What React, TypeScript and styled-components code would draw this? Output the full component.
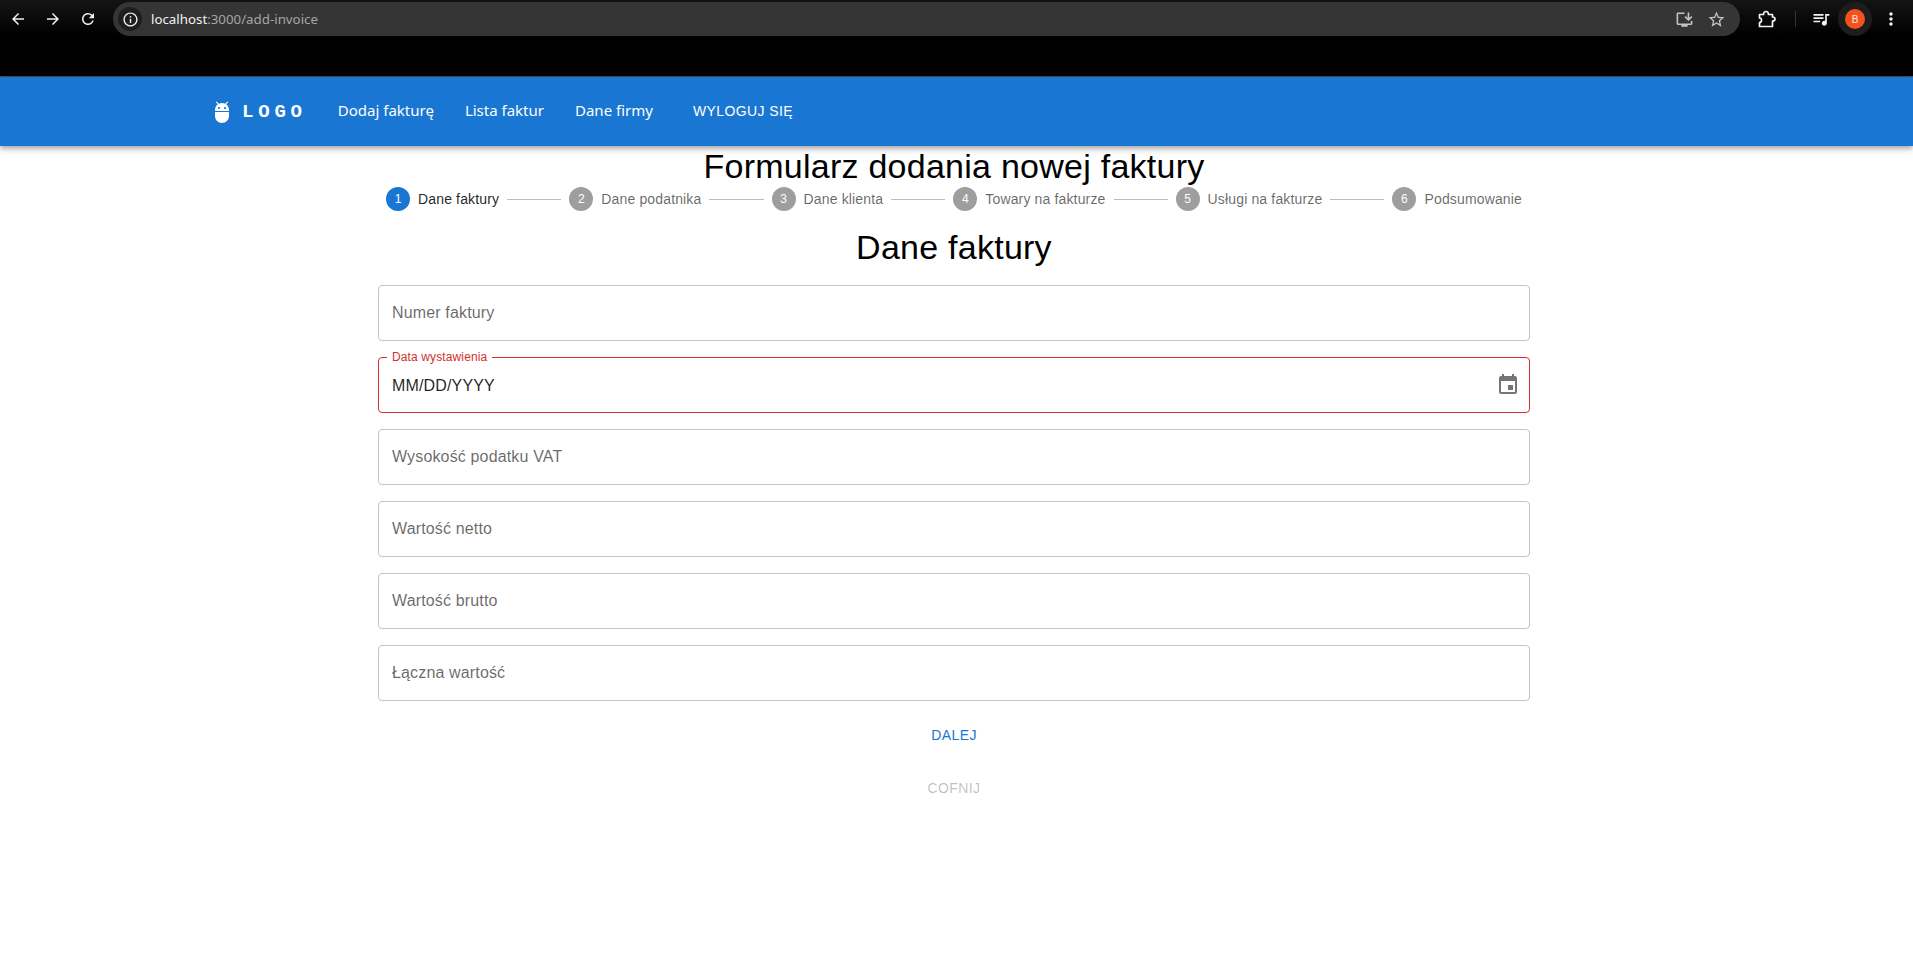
import styled, { createGlobalStyle } from 'styled-components';
import {
    MdAdb,
    MdArrowBack,
    MdArrowForward,
    MdEvent,
    MdInfoOutline,
    MdInstallDesktop,
    MdMoreVert,
    MdQueueMusic,
    MdRefresh,
    MdStarBorder,
} from 'react-icons/md';

const steps = [
    'Dane faktury',
    'Dane podatnika',
    'Dane klienta',
    'Towary na fakturze',
    'Usługi na fakturze',
    'Podsumowanie',
];

const fields = ['Numer faktury', 'Data wystawienia', 'Wysokość podatku VAT', 'Wartość netto', 'Wartość brutto', 'Łączna wartość'];

const PuzzleIcon = () => (
    <svg width="20" height="20" viewBox="0 0 20 20" fill="none" stroke="currentColor" strokeWidth="1.7" strokeLinejoin="round">
        <path d="M2.5 5.5 H6.5 C6.5 3.5 7.7 2.5 9 2.5 C10.3 2.5 11.5 3.5 11.5 5.5 H15.5 V8 C17.2 8 18 9 18 10 C18 11 17.2 12 15.5 12 V17.5 H2.5 V13.5 C3.8 13.5 4.5 12.5 4.5 11.2 C4.5 9.9 3.8 9 2.5 9 Z" />
    </svg>
);

const App = () => (
    <>
        <GlobalStyle />
        <Chrome>
            <ChromeButton><MdArrowBack /></ChromeButton>
            <ChromeButton><MdArrowForward /></ChromeButton>
            <ChromeButton><MdRefresh /></ChromeButton>
            <AddressBar>
                <InfoChip><MdInfoOutline /></InfoChip>
                <Url>
                    <b>localhost</b>:3000/add-invoice
                </Url>
                <AddressIcons>
                    <MdInstallDesktop />
                    <MdStarBorder />
                </AddressIcons>
            </AddressBar>
            <Extensions>
                <PuzzleIcon />
                <Divider />
                <MdQueueMusic />
                <AvatarRing>
                    <Avatar>B</Avatar>
                </AvatarRing>
                <MdMoreVert />
            </Extensions>
        </Chrome>

        <AppBar>
            <Brand>
                <MdAdb />
                <BrandText>LOGO</BrandText>
            </Brand>
            <NavLink>Dodaj fakturę</NavLink>
            <NavLink>Lista faktur</NavLink>
            <NavLink>Dane firmy</NavLink>
            <Logout>WYLOGUJ SIĘ</Logout>
        </AppBar>

        <Main>
            <Title>Formularz dodania nowej faktury</Title>
            <Stepper>
                {steps.map((step, i) => (
                    <StepGroup key={step} $last={i === steps.length - 1}>
                        <Step>
                            <StepDot $active={i === 0}>{i + 1}</StepDot>
                            <StepLabel $active={i === 0}>{step}</StepLabel>
                        </Step>
                        {i < steps.length - 1 && <Connector />}
                    </StepGroup>
                ))}
            </Stepper>
            <Title>Dane faktury</Title>
            <Form>
                {fields.map((field, i) =>
                    i === 1 ? (
                        <Field key={field} $error>
                            <FloatLabel>{field}</FloatLabel>
                            <FieldValue>MM/DD/YYYY</FieldValue>
                            <MdEvent />
                        </Field>
                    ) : (
                        <Field key={field}>
                            <FieldLabel>{field}</FieldLabel>
                        </Field>
                    )
                )}
            </Form>
            <Actions>
                <ActionButton>DALEJ</ActionButton>
                <ActionButton $disabled>COFNIJ</ActionButton>
            </Actions>
        </Main>
    </>
);

export default App;

const GlobalStyle = createGlobalStyle`
    html, body {
        margin: 0;
        background: #fff;
        font-family: 'Liberation Sans', Arial, sans-serif;
    }
    * {
        box-sizing: border-box;
    }
`;

const Chrome = styled.div`
    display: flex;
    align-items: flex-start;
    height: 77px;
    padding: 2px 0 0 0;
    background: linear-gradient(#141414 0, #000 36px, #000 75px);
    border-bottom: 1px solid #4a4a4a;
    color: #fff;
`;

const ChromeButton = styled.div`
    display: flex;
    align-items: center;
    justify-content: center;
    width: 35px;
    height: 34px;
    font-size: 18px;
    color: #f0f0f0;
`;

const AddressBar = styled.div`
    display: flex;
    align-items: center;
    width: 1627px;
    height: 34px;
    margin-left: 8px;
    padding: 0 14px 0 5px;
    border-radius: 17px;
    background: #353535;
`;

const InfoChip = styled.div`
    display: flex;
    align-items: center;
    justify-content: center;
    width: 24px;
    height: 24px;
    border-radius: 50%;
    background: #1f1f1f;
    font-size: 17px;
    color: #eee;
`;

const Url = styled.span`
    margin-left: 9px;
    font-family: 'Noto Sans', sans-serif;
    font-size: 13.3px;
    color: #a6a6a6;

    b {
        font-weight: 400;
        color: #f2f2f2;
    }
`;

const AddressIcons = styled.div`
    display: flex;
    align-items: center;
    gap: 13px;
    margin-left: auto;
    font-size: 19px;
    color: #c4c4c4;
`;

const Extensions = styled.div`
    display: flex;
    align-items: center;
    height: 34px;
    margin-left: 17px;
    font-size: 20px;
    color: #f2f2f2;
`;

const Divider = styled.span`
    width: 1px;
    height: 16px;
    margin: 0 15px 0 18px;
    background: #333;
`;

const AvatarRing = styled.div`
    display: flex;
    align-items: center;
    justify-content: center;
    width: 34px;
    height: 34px;
    margin: 0 9px 0 7px;
    border-radius: 50%;
    background: #1d1d1d;
`;

const Avatar = styled.div`
    display: flex;
    align-items: center;
    justify-content: center;
    width: 20px;
    height: 20px;
    border-radius: 50%;
    background: #f4511e;
    font-size: 10px;
    color: #ffe6de;
`;

const AppBar = styled.header`
    position: relative;
    display: flex;
    align-items: center;
    height: 69px;
    padding-left: 210px;
    background: #1976d2;
    color: #fff;
    box-shadow: 0 2px 4px -1px rgba(0, 0, 0, 0.2), 0 4px 5px 0 rgba(0, 0, 0, 0.14), 0 1px 10px 0 rgba(0, 0, 0, 0.12);
`;

const Brand = styled.div`
    display: flex;
    align-items: center;
    margin-right: 31px;
    font-size: 24px;
`;

const BrandText = styled.span`
    margin-left: 8px;
    font-family: 'Liberation Mono', monospace;
    font-size: 19px;
    font-weight: 700;
    letter-spacing: 4.8px;
`;

const NavLink = styled.span`
    margin-right: 31px;
    margin-top: -4px;
    font-family: 'Noto Sans', sans-serif;
    font-size: 15px;
`;

const Logout = styled.span`
    margin-left: 9px;
    margin-top: -1px;
    font-size: 14px;
    letter-spacing: 0.4px;
`;

const Main = styled.main`
    width: 1152px;
    margin: -1px 0 0 378px;
`;

const Title = styled.h4`
    margin: 0;
    font-size: 34px;
    font-weight: 400;
    letter-spacing: 0.25px;
    line-height: 42px;
    text-align: center;
    color: #000;
`;

const Stepper = styled.div`
    display: flex;
    align-items: center;
    margin-bottom: 15px;
`;

const StepGroup = styled.div<{ $last?: boolean }>`
    display: flex;
    align-items: center;
    flex: ${({ $last }) => ($last ? '0 0 auto' : '1 1 auto')};
`;

const Step = styled.div`
    display: flex;
    align-items: center;
    padding: 0 8px;
`;

const StepDot = styled.span<{ $active?: boolean }>`
    display: flex;
    align-items: center;
    justify-content: center;
    width: 24px;
    height: 24px;
    margin-right: 8px;
    border-radius: 50%;
    background: ${({ $active }) => ($active ? '#1976d2' : '#9e9e9e')};
    font-size: 12px;
    color: #fff;
`;

const StepLabel = styled.span<{ $active?: boolean }>`
    font-size: 14px;
    letter-spacing: 0.15px;
    white-space: nowrap;
    color: ${({ $active }) => ($active ? 'rgba(0, 0, 0, 0.87)' : 'rgba(0, 0, 0, 0.6)')};
`;

const Connector = styled.span`
    flex: 1 1 auto;
    border-top: 1px solid #bdbdbd;
`;

const Form = styled.div`
    display: flex;
    flex-direction: column;
    gap: 16px;
    margin-top: 17px;
`;

const Field = styled.div<{ $error?: boolean }>`
    position: relative;
    display: flex;
    align-items: center;
    justify-content: space-between;
    height: 56px;
    padding: 0 9px 0 13px;
    border: 1px solid ${({ $error }) => ($error ? '#d32f2f' : '#c4c4c4')};
    border-radius: 4px;

    svg {
        font-size: 24px;
        color: rgba(0, 0, 0, 0.54);
    }
`;

const FieldLabel = styled.span`
    font-size: 16px;
    letter-spacing: 0.15px;
    color: rgba(0, 0, 0, 0.6);
`;

const FieldValue = styled.span`
    margin-top: 1px;
    font-size: 16px;
    letter-spacing: 0.15px;
    color: rgba(0, 0, 0, 0.87);
`;

const FloatLabel = styled.span`
    position: absolute;
    top: -7px;
    left: 8px;
    padding: 0 5px;
    background: #fff;
    font-size: 12px;
    letter-spacing: 0.12px;
    line-height: 12px;
    color: #d32f2f;
`;

const Actions = styled.div`
    display: flex;
    flex-direction: column;
    align-items: center;
    gap: 17px;
    margin-top: 16px;
`;

const ActionButton = styled.span<{ $disabled?: boolean }>`
    display: flex;
    align-items: center;
    height: 36px;
    padding: 0 8px;
    font-size: 14px;
    letter-spacing: 0.4px;
    color: ${({ $disabled }) => ($disabled ? 'rgba(0, 0, 0, 0.26)' : '#1976d2')};
`;
